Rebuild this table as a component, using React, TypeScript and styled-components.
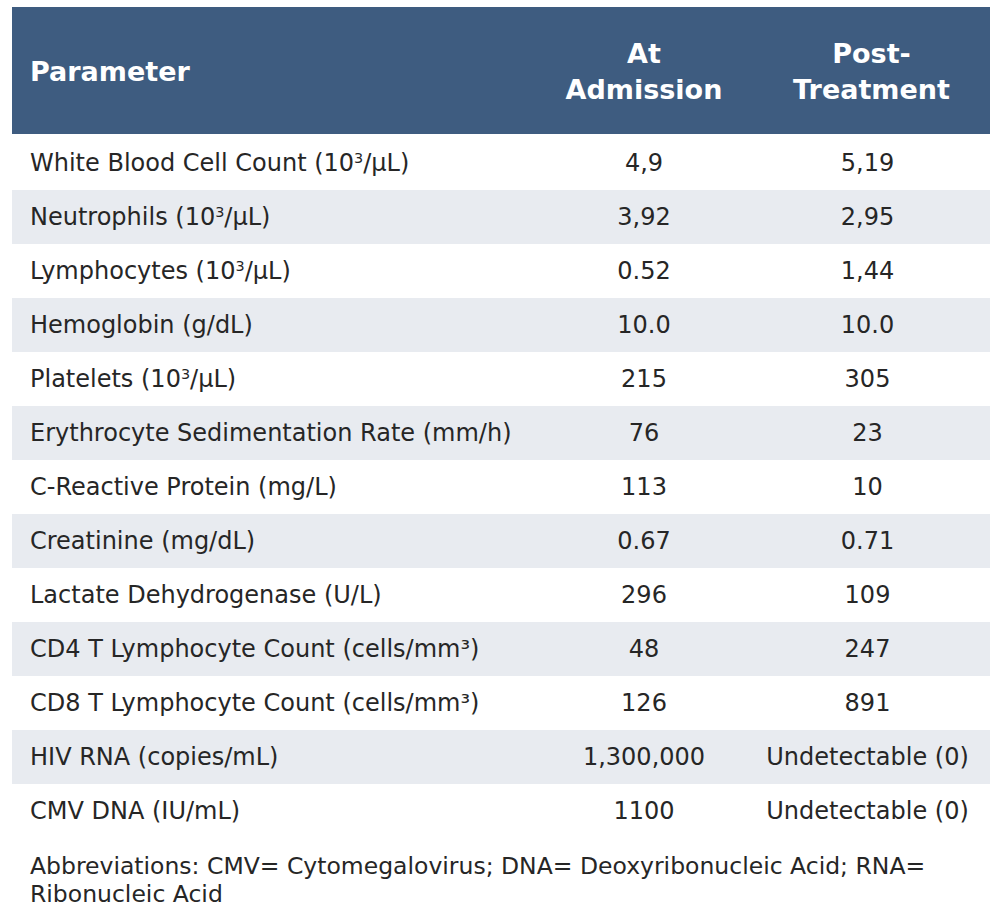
import React from 'react'
import styled, { createGlobalStyle } from 'styled-components'

const GlobalStyle = createGlobalStyle`
  body {
    margin: 0;
    background: #ffffff;
    font-family: 'DejaVu Sans', 'Noto Sans', sans-serif;
    color: #262626;
  }
`

const Page = styled.div`
  padding: 7px 10px 0 12px;
`

const Table = styled.div`
  display: grid;
  grid-template-columns: 523px 218px 237px;
  width: 978px;
`

const HeadCell = styled.div<{ $align?: 'left' | 'center' }>`
  background: #3e5c80;
  color: #ffffff;
  font-weight: 700;
  font-size: 27px;
  line-height: 36px;
  height: 127px;
  display: flex;
  align-items: center;
  justify-content: ${(p) => (p.$align === 'left' ? 'flex-start' : 'center')};
  text-align: ${(p) => p.$align || 'center'};
  padding: ${(p) => (p.$align === 'left' ? '3px 0 0 18px' : '3px 0 0 0')};
  box-sizing: border-box;
  &:last-child {
    padding-right: 8px;
  }
`

const Cell = styled.div<{ $shade: boolean; $first?: boolean; $last?: boolean; $top?: boolean }>`
  background: ${(p) => (p.$shade ? '#e8ebf0' : '#ffffff')};
  height: ${(p) => (p.$top ? '56px' : '54px')};
  display: flex;
  align-items: center;
  justify-content: ${(p) => (p.$first ? 'flex-start' : 'center')};
  padding: ${(p) => (p.$first ? '0 0 0 18px' : p.$last ? '0 8px 0 0' : '0')};
  padding-top: ${(p) => (p.$top ? '2px' : '0')};
  font-size: 24px;
  white-space: nowrap;
  box-sizing: border-box;
`

const Footnote = styled.div`
  font-size: 23.5px;
  line-height: 28px;
  padding: 14px 0 0 18px;
  width: 960px;
`

const rows: [React.ReactNode, string, string][] = [
  [<>White Blood Cell Count (10<sup>3</sup>/μL)</>, '4,9', '5,19'],
  [<>Neutrophils (10<sup>3</sup>/μL)</>, '3,92', '2,95'],
  [<>Lymphocytes (10<sup>3</sup>/μL)</>, '0.52', '1,44'],
  ['Hemoglobin (g/dL)', '10.0', '10.0'],
  [<>Platelets (10<sup>3</sup>/μL)</>, '215', '305'],
  ['Erythrocyte Sedimentation Rate (mm/h)', '76', '23'],
  ['C-Reactive Protein (mg/L)', '113', '10'],
  ['Creatinine (mg/dL)', '0.67', '0.71'],
  ['Lactate Dehydrogenase (U/L)', '296', '109'],
  ['CD4 T Lymphocyte Count (cells/mm³)', '48', '247'],
  ['CD8 T Lymphocyte Count (cells/mm³)', '126', '891'],
  ['HIV RNA (copies/mL)', '1,300,000', 'Undetectable (0)'],
  ['CMV DNA (IU/mL)', '1100', 'Undetectable (0)'],
]

const Sup = styled.span`
  & sup {
    font-size: 0.6em;
    vertical-align: 0.55em;
    line-height: 0;
  }
`

export const App: React.FC = () => {
  return (
    <Page>
      <GlobalStyle />
      <Table>
        <HeadCell $align="left">Parameter</HeadCell>
        <HeadCell>
          At
          <br />
          Admission
        </HeadCell>
        <HeadCell>
          Post-
          <br />
          Treatment
        </HeadCell>
        {rows.map(([name, a, b], i) => (
          <React.Fragment key={i}>
            <Cell $shade={i % 2 === 1} $top={i === 0} $first>
              <Sup>{name}</Sup>
            </Cell>
            <Cell $shade={i % 2 === 1} $top={i === 0}>
              {a}
            </Cell>
            <Cell $shade={i % 2 === 1} $top={i === 0} $last>
              {b}
            </Cell>
          </React.Fragment>
        ))}
      </Table>
      <Footnote>
        Abbreviations: CMV= Cytomegalovirus; DNA= Deoxyribonucleic Acid; RNA=
        Ribonucleic Acid
      </Footnote>
    </Page>
  )
}

export default App
